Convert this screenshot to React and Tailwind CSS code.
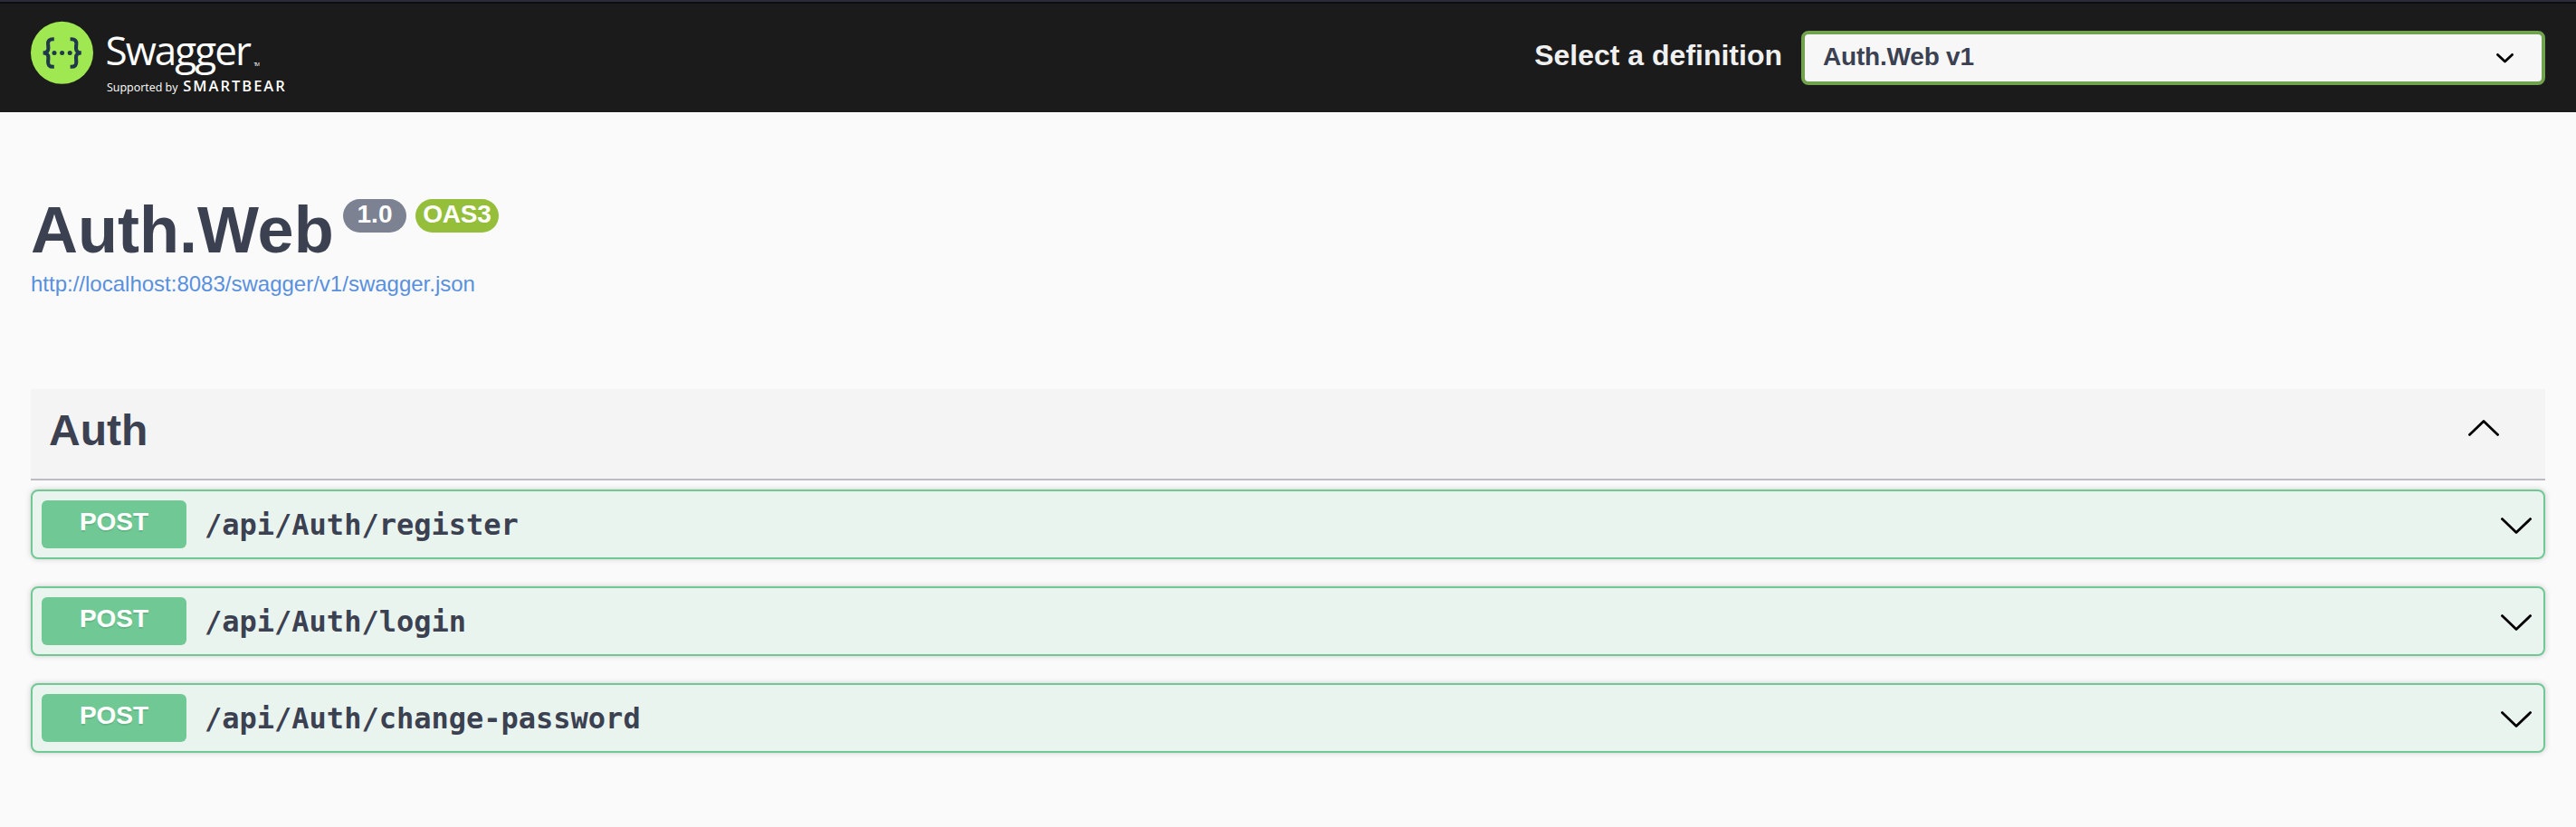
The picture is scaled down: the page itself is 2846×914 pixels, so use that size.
const operations = [
  { method: "POST", path: "/api/Auth/register" },
  { method: "POST", path: "/api/Auth/login" },
  { method: "POST", path: "/api/Auth/change-password" },
];

function Logo() {
  return (
    <svg className="block h-[120px] w-[320px]" viewBox="0 0 320 120" role="img" aria-label="Swagger">
      <circle cx="34.5" cy="54.3" r="34.5" fill="#9fe852" />
      <g fill="none" stroke="#20394a" strokeWidth="4.1">
        <path d="M25.8 39.2H24.5C20.4 39.2 19 41.4 19.1 44.4L19.4 49C19.5 52.4 17.6 54.4 13.6 54.4C17.6 54.4 19.5 56.4 19.4 59.8L19.1 64.4C19 67.6 20.4 69.8 24.5 69.8H25.8" />
        <path d="M43.6 39.2H44.9C49 39.2 50.4 41.4 50.3 44.4L50 49C49.9 52.4 51.8 54.4 55.8 54.4C51.8 54.4 49.9 56.4 50 59.8L50.3 64.4C50.4 67.6 49 69.8 44.9 69.8H43.6" />
      </g>
      <g fill="#20394a">
        <circle cx="26" cy="54.5" r="2.5" />
        <circle cx="34.6" cy="54.5" r="2.5" />
        <circle cx="43.2" cy="54.5" r="2.5" />
      </g>
      <g fill="#fff" fontFamily="'Open Sans', sans-serif">
        <text x="82.5" y="68" fontSize="44" textLength="161.5" lengthAdjust="spacing">Swagger</text>
        <text x="246.5" y="68.5" fontSize="5.5" textLength="6.5">TM</text>
        <text x="84" y="97" fontSize="12.5" textLength="78.5" lengthAdjust="spacing">Supported by</text>
        <text x="168.3" y="96.7" fontSize="16.5" fontWeight="600" textLength="112.5" lengthAdjust="spacing">SMARTBEAR</text>
      </g>
    </svg>
  );
}

function Arrow({ up = false }) {
  return (
    <svg className="block h-[18px] w-[34px] shrink-0" viewBox="0 0 34 18" fill="none" stroke="#000" strokeWidth="2.8" strokeLinecap="round" strokeLinejoin="round">
      <path d={up ? "M1.4 16.4L17 1.5L32.6 16.4" : "M1.4 1.6L17 16.5L32.6 1.6"} />
    </svg>
  );
}

function Operation({ method, path }) {
  return (
    <button className="flex h-[77px] w-full items-center rounded-lg border-2 border-[#70c995] bg-[#eaf4ef] pl-[10px] pr-[13px] text-left shadow-[0_0_6px_rgba(0,0,0,0.19)]">
      <span className="h-[53px] w-[160px] rounded-md bg-[#70c995] pt-[8px] text-center text-[28px] leading-8 font-bold text-white [text-shadow:0_2px_0_rgba(0,0,0,0.1)]">
        {method}
      </span>
      <span className="ml-[20px] flex-1 font-['DejaVu_Sans_Mono',monospace] text-[32px] leading-[38px] font-bold">{path}</span>
      <span className="pt-[2px]"><Arrow /></span>
    </button>
  );
}

export default function App() {
  return (
    <div className="h-[914px] overflow-hidden bg-[#fafafa] font-['Liberation_Sans',Arial,sans-serif] text-[#3b4151]">
      <header className="flex h-[124px] justify-between border-t-2 border-[#2b2b37] bg-[#1b1b1b] pr-[34px] pl-[34px] shadow-[inset_0_2px_0_#0d0d0f]">
        <a className="pt-[2px]"><Logo /></a>
        <label className="flex items-start pt-[32px]">
          <span className="mr-[21px] pt-[9px] text-[32px] leading-9 font-bold text-[#f0f0f0]">Select a definition</span>
          <span className="flex h-[60px] w-[822px] items-center justify-between rounded-lg border-4 border-[#71a24e] bg-[#f7f7f7] pr-[31px] pl-[20px]">
            <span className="-mt-[3px] text-[28px] leading-8 font-bold tracking-[-0.2px]">Auth.Web v1</span>
            <svg className="block h-[11px] w-[19px]" viewBox="0 0 19 11" fill="none" stroke="#000" strokeWidth="2.8" strokeLinecap="round" strokeLinejoin="round">
              <path d="M1.5 1.4L9.5 9L17.5 1.4" />
            </svg>
          </span>
        </label>
      </header>
      <main className="px-[34px]">
        <section className="h-[306px] pt-[90px]">
          <h1 className="flex items-start text-[72px] leading-[80px] font-bold">
            <span className="w-[345px]">Auth.Web</span>
            <span className="mt-[6px] h-[37px] w-[70px] rounded-full bg-[#7d8293] text-center text-[28px] leading-[33px] text-white">1.0</span>
            <span className="mt-[6px] ml-[10px] h-[37px] w-[92px] rounded-full bg-[#95bf3b] text-center text-[28px] leading-[33px] tracking-[-0.2px] text-white">OAS3</span>
          </h1>
          <a className="mt-[6px] block text-[24px] leading-7 text-[#5990de]">http://localhost:8083/swagger/v1/swagger.json</a>
        </section>
        <section>
          <h2 className="flex h-[101px] justify-between border-b-2 border-[#babcc2] bg-[#f4f4f4] pr-[51px] pl-[20px]">
            <span className="pt-[18px] text-[48px] leading-[55px] font-bold">Auth</span>
            <span className="pt-[34px]"><Arrow up /></span>
          </h2>
          <div className="flex flex-col gap-[30px] pt-[10px]">
            {operations.map((op) => (
              <Operation key={op.path} {...op} />
            ))}
          </div>
        </section>
      </main>
    </div>
  );
}
